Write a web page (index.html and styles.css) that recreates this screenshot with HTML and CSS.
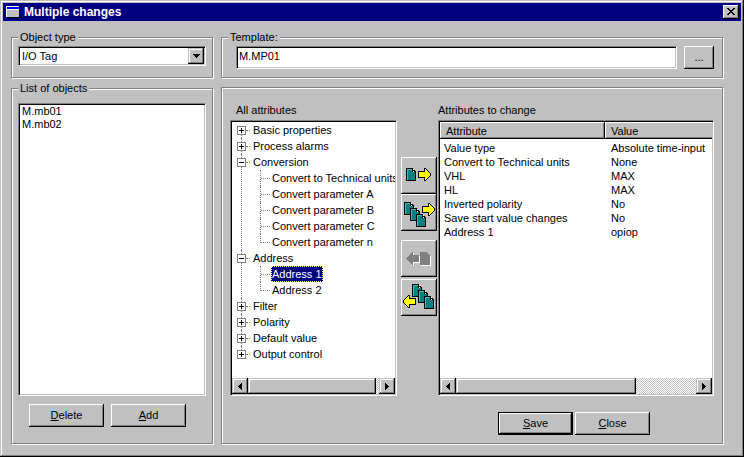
FILE: index.html
```html
<!DOCTYPE html>
<html lang="en">
<head>
<meta charset="utf-8">
<title>Multiple changes</title>
<link rel="stylesheet" href="styles.css">
</head>
<body>
<svg class="defs" width="0" height="0" aria-hidden="true">
  <defs>
    <g id="doc">
      <path d="M0 0h7v1h1v1h1v1h1v10H0z" fill="#000"/>
      <path d="M1 1h5v3h3v8H1z" fill="#008080"/>
      <path d="M1 1h5v1H2v10H1z" fill="#40b8b8"/>
      <path d="M7 1h1v1H7zM7 3h1v1H7z" fill="#fff"/>
    </g>
    <g id="arrow">
      <path d="M6 0h2v1h1v1h1v1h1v1h1v1h1v3h-1v1h-1v1h-1v1H9v1H8v1H6v-3H0V3h6z" fill="#000"/>
      <path d="M7 1v3H1v5h6v3h1v-1h1v-1h1V9h1V8h1V5h-1V4h-1V3H9V2H8V1z" fill="#ff0"/>
    </g>
    <g id="removeShape">
      <path d="M0 6h1V5h1V4h1V3h1V2h1V1h1V0h1v3h6v7H7v3H6v-1H5v-1H4v-1H3V9H2V8H1V7H0zM14 0h7v1h1v1h1v1h1v10H14z"/>
    </g>
  </defs>
</svg>
<main class="window">
  <header class="titlebar">
    <svg class="app-icon" width="14" height="12" shape-rendering="crispEdges" aria-hidden="true"><path d="M0 0h14v12H0z" fill="#000"/><path d="M0 0h13v11H0z" fill="#fff"/><path d="M1 1h12v2H1z" fill="#00f"/><path d="M1 4h12v7H1z" fill="#c0c0c0"/></svg>
    <h1>Multiple changes</h1>
    <button class="close" type="button" aria-label="Close window"><svg width="16" height="14" shape-rendering="crispEdges"><path d="M4 3h2v1h1v1h2V4h1V3h2v1h-1v1h-1v1H9v1h1v1h1v1h1v1h-2V9H9V8H7v1H6v1H4V9h1V8h1V7h1V6H6V5H5V4H4z"/></svg></button>
  </header>
  <form class="content">
    <fieldset class="group">
      <legend><label for="type">Object type</label></legend>
      <div class="combo sunken">
        <select id="type"><option>I/O Tag</option></select>
        <span class="combo-arrow"><svg width="7" height="4" shape-rendering="crispEdges" aria-hidden="true"><path d="M0 0h7v1H6v1H5v1H4v1H3V3H2V2H1V1H0z"/></svg></span>
      </div>
    </fieldset>
    <fieldset class="group">
      <legend><label for="template">Template:</label></legend>
      <div class="template-row">
        <input class="sunken" id="template" type="text" value="M.MP01">
        <button class="button browse" type="button" aria-label="Browse">...</button>
      </div>
    </fieldset>
    <fieldset class="group objects">
      <legend><label for="objects">List of objects</label></legend>
      <select class="object-list sunken" id="objects" multiple>
        <option>M.mb01</option>
        <option>M.mb02</option>
      </select>
      <div class="object-actions">
        <button class="button" type="button"><u>D</u>elete</button>
        <button class="button" type="button"><u>A</u>dd</button>
      </div>
    </fieldset>
    <section class="group attributes">
      <h2 class="all-title">All attributes</h2>
      <h2 class="change-title">Attributes to change</h2>
      <div class="pane sunken tree-pane">
        <ul class="tree" role="tree">
          <li><button class="toggle plus" type="button" aria-label="Expand"></button>Basic properties</li>
          <li><button class="toggle plus" type="button" aria-label="Expand"></button>Process alarms</li>
          <li><button class="toggle" type="button" aria-label="Collapse"></button>Conversion
            <ul>
              <li>Convert to Technical units</li>
              <li>Convert parameter A</li>
              <li>Convert parameter B</li>
              <li>Convert parameter C</li>
              <li>Convert parameter n</li>
            </ul>
          </li>
          <li><button class="toggle" type="button" aria-label="Collapse"></button>Address
            <ul>
              <li><span class="selected">Address 1</span></li>
              <li>Address 2</li>
            </ul>
          </li>
          <li><button class="toggle plus" type="button" aria-label="Expand"></button>Filter</li>
          <li><button class="toggle plus" type="button" aria-label="Expand"></button>Polarity</li>
          <li><button class="toggle plus" type="button" aria-label="Expand"></button>Default value</li>
          <li><button class="toggle plus" type="button" aria-label="Expand"></button>Output control</li>
        </ul>
        <div class="scrollbar">
          <button type="button" aria-label="Scroll left"><svg width="4" height="7" shape-rendering="crispEdges"><path d="M4 0v7H3V6H2V5H1V4H0V3h1V2h1V1h1V0z"/></svg></button>
          <div class="track"><div class="thumb tree-thumb"></div></div>
          <button type="button" aria-label="Scroll right"><svg width="4" height="7" shape-rendering="crispEdges"><path d="M0 0h1v1h1v1h1v1h1v1H3v1H2v1H1v1H0z"/></svg></button>
        </div>
      </div>
      <div class="transfer">
        <button type="button" aria-label="Add attribute"><svg width="36" height="37" shape-rendering="crispEdges"><use href="#doc" x="5" y="11"/><use href="#arrow" x="17" y="11"/></svg></button>
        <button type="button" aria-label="Add all attributes"><svg width="36" height="37" shape-rendering="crispEdges"><use href="#doc" x="3" y="8"/><use href="#doc" x="9" y="14"/><use href="#doc" x="15" y="20"/><use href="#arrow" x="21" y="9"/></svg></button>
        <button class="remove" type="button" aria-label="Remove attribute" disabled><svg width="36" height="37" shape-rendering="crispEdges"><use href="#removeShape" x="6" y="13" fill="#fff"/><use href="#removeShape" x="5" y="12" fill="#808080"/></svg></button>
        <button class="remove-all" type="button" aria-label="Remove all attributes"><svg width="36" height="37" shape-rendering="crispEdges"><use href="#doc" x="11" y="5"/><use href="#doc" x="17" y="11"/><use href="#doc" x="23" y="17"/><use href="#arrow" transform="translate(15 16) scale(-1 1)"/></svg></button>
      </div>
      <div class="pane sunken">
        <div class="table-area">
          <table>
            <thead><tr><th class="name">Attribute</th><th>Value</th></tr></thead>
            <tbody>
              <tr><td>Value type</td><td>Absolute time-input</td></tr>
              <tr><td>Convert to Technical units</td><td>None</td></tr>
              <tr><td>VHL</td><td>MAX</td></tr>
              <tr><td>HL</td><td>MAX</td></tr>
              <tr><td>Inverted polarity</td><td>No</td></tr>
              <tr><td>Save start value changes</td><td>No</td></tr>
              <tr><td>Address 1</td><td>opiop</td></tr>
            </tbody>
          </table>
        </div>
        <div class="scrollbar">
          <button type="button" aria-label="Scroll left"><svg width="4" height="7" shape-rendering="crispEdges"><path d="M4 0v7H3V6H2V5H1V4H0V3h1V2h1V1h1V0z"/></svg></button>
          <div class="track"><div class="thumb table-thumb"></div></div>
          <button type="button" aria-label="Scroll right"><svg width="4" height="7" shape-rendering="crispEdges"><path d="M0 0h1v1h1v1h1v1h1v1H3v1H2v1H1v1H0z"/></svg></button>
        </div>
      </div>
      <div class="dialog-actions">
        <button class="button default" type="button"><u>S</u>ave</button>
        <button class="button" type="button"><u>C</u>lose</button>
      </div>
    </section>
  </form>
</main>
</body>
</html>
```
FILE: styles.css
```css
* { box-sizing: border-box; }

html, body { height: 100%; margin: 0; }

body, button, input, select {
  font: 11px/14px "Liberation Sans", Arial, sans-serif;
  color: #000;
}

h1, h2, ul { margin: 0; padding: 0; font-size: inherit; font-weight: normal; }
ul { list-style: none; }
button { margin: 0; padding: 0; border: 0; background: #c0c0c0; }
svg { display: block; }
.defs { position: absolute; }

.window {
  display: flex;
  flex-direction: column;
  min-height: 100%;
  padding: 3px;
  background: #c0c0c0;
  box-shadow: inset -1px -1px #000, inset 1px 1px #c0c0c0, inset -2px -2px #808080, inset 2px 2px #fff;
}

.titlebar {
  display: flex;
  align-items: center;
  gap: 4px;
  height: 18px;
  padding: 0 2px 0 3px;
  background: #000080;
}
.titlebar h1 { flex: 1; color: #fff; font-size: 12px; font-weight: bold; }
.close { box-shadow: inset -1px -1px #000, inset 1px 1px #fff, inset -2px -2px #808080; }

.content {
  flex: 1;
  display: grid;
  grid-template-columns: 202px minmax(0, 1fr);
  grid-template-rows: auto minmax(0, 1fr);
  gap: 3px 8px;
  padding: 9px 18px 10px 8px;
}

.group {
  min-width: 0;
  margin: 0;
  padding: 2px 6px 8px;
  border: 1px solid #808080;
  box-shadow: 1px 1px #fff, inset 1px 1px #fff;
}
legend { height: 14px; padding: 0 2px; background: #c0c0c0; }

.sunken {
  border: 1px solid;
  border-color: #808080 #fff #fff #808080;
  padding: 1px;
  background: #fff;
  box-shadow: inset 1px 1px #000, inset -1px -1px #c0c0c0;
  border-radius: 0;
  outline: 0;
}

.combo { position: relative; height: 20px; }
.combo select {
  display: block;
  width: 100%;
  height: 16px;
  padding: 0 18px 0 2px;
  border: 0;
  background: transparent;
  appearance: none;
  outline: 0;
}
.combo-arrow {
  position: absolute;
  top: 1px;
  right: 1px;
  bottom: 1px;
  display: grid;
  place-items: center;
  width: 16px;
  background: #c0c0c0;
  pointer-events: none;
}
.combo-arrow, .scrollbar button, .thumb {
  box-shadow: inset -1px -1px #000, inset 1px 1px #c0c0c0, inset -2px -2px #808080, inset 2px 2px #fff;
}

.template-row { display: flex; gap: 7px; padding: 0 2px 0 8px; }
.template-row input { flex: 1; min-width: 0; height: 23px; padding: 0 3px 4px 2px; }

.button {
  width: 75px;
  height: 23px;
  padding-bottom: 2px;
  box-shadow: inset -1px -1px #000, inset 1px 1px #fff, inset -2px -2px #808080;
}
.browse { width: 30px; }
.default { border: 1px solid #000; }

.objects { display: flex; flex-direction: column; gap: 8px; padding: 8px 6px 16px; }
.object-list { flex: 1; width: 100%; min-height: 60px; overflow: hidden; }
.object-list option { min-height: 13px; padding: 0 2px; line-height: 13px; }
.object-actions { display: flex; gap: 7px; padding-left: 11px; }

.attributes {
  display: grid;
  grid-template-columns: 171px 37px minmax(0, 1fr);
  grid-template-rows: 14px minmax(0, 1fr) 23px;
  margin-top: 6px;
  padding: 15px 8px 8px;
}
.all-title { grid-column: 1 / 3; padding-left: 6px; }
.pane { display: flex; flex-direction: column; min-height: 0; margin: 3px 0 16px; padding: 1px; }
.tree-pane { margin-right: 4px; }

.tree { flex: 1; min-height: 0; overflow: hidden; }
.tree li { position: relative; padding-left: 21px; line-height: 16px; white-space: nowrap; }
.tree li li { padding-left: 19px; }
.tree li::before {
  content: "";
  position: absolute;
  top: 0;
  bottom: 0;
  left: 9px;
  border-left: 1px dotted #808080;
}
.tree li::after {
  content: "";
  position: absolute;
  top: 8px;
  left: 14px;
  width: 4px;
  border-top: 1px dotted #808080;
}
.tree > li:first-child::before { top: 8px; }
.tree > li:last-child::before { bottom: 8px; }
.tree li li::before { left: 7px; }
.tree li li::after { left: 8px; width: 9px; }
.tree li li:last-child::before { bottom: 7px; }
.toggle {
  position: absolute;
  z-index: 1;
  top: 4px;
  left: 5px;
  width: 9px;
  height: 9px;
  border: 1px solid #808080;
  background: linear-gradient(#000, #000) center / 5px 1px no-repeat #fff;
}
.plus {
  background: linear-gradient(#000, #000) center / 5px 1px no-repeat,
    linear-gradient(#000, #000) center / 1px 5px no-repeat #fff;
}
.selected {
  display: inline-block;
  height: 16px;
  margin-left: -1px;
  padding: 0 1px;
  line-height: 16px;
  vertical-align: top;
  color: #fff;
  background: #000080;
  outline: 1px dotted #ffff80;
  outline-offset: -1px;
}

.scrollbar { display: flex; height: 16px; }
.scrollbar button { display: grid; place-items: center; width: 16px; height: 16px; }
.track { flex: 1; background: repeating-conic-gradient(#fff 0 25%, #c0c0c0 0 50%) 0 0 / 2px 2px; }
.thumb { height: 16px; background: #c0c0c0; }
.tree-thumb { width: 98%; }
.table-thumb { width: 75%; }

.transfer { display: flex; flex-direction: column; padding-top: 40px; }
.transfer button { width: 36px; height: 37px; box-shadow: inset -1px -1px #000, inset 1px 1px #fff, inset -2px -2px #808080; }
.transfer .remove { margin-top: 9px; }
.transfer .remove-all { margin-top: 2px; }

.table-area { flex: 1; min-height: 0; overflow: hidden; }
table { width: 100%; table-layout: fixed; border-collapse: collapse; }
th, td { text-align: left; font-weight: normal; white-space: nowrap; }
th {
  height: 17px;
  padding: 0 6px;
  background: #c0c0c0;
  box-shadow: inset -1px -1px #000, inset 1px 1px #fff, inset -2px -2px #808080;
}
th:last-child { box-shadow: inset 0 -1px #000, inset 1px 1px #fff, inset 0 -2px #808080; }
.name { width: 165px; }
td { height: 14px; padding: 0 4px; line-height: 14px; }
td + td { padding-left: 6px; }
tbody::before { content: ""; display: block; height: 2px; }

.dialog-actions { grid-column: 1 / -1; display: flex; justify-content: flex-end; gap: 2px; padding-right: 64px; }
```
